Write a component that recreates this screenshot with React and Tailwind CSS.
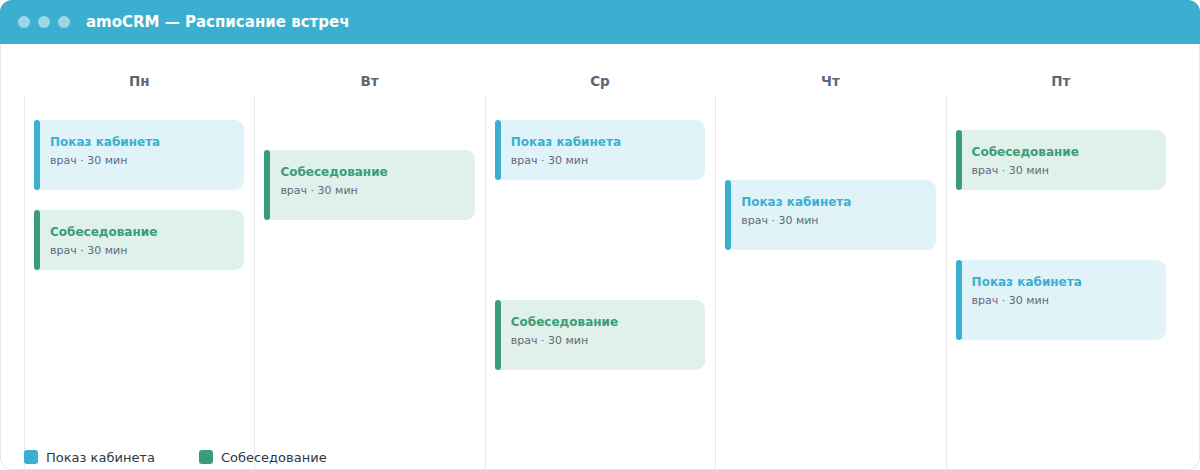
import React from "react";

const BLUE = { bar: "bg-[#3aafcf]", bg: "bg-[#e0f3f9]", text: "text-[#3aafcf]", title: "Показ кабинета" };
const GREEN = { bar: "bg-[#3a9c78]", bg: "bg-[#e0f0ea]", text: "text-[#3a9c78]", title: "Собеседование" };

function Card({ kind, h, mt }) {
  return (
    <div className={`flex ml-[9px] mr-[10px] ${mt} ${h}`}>
      <div className={`w-[6px] shrink-0 rounded-[3px] ${kind.bar}`} />
      <div className={`flex-1 rounded-r-[9px] ${kind.bg} pl-[10px] pt-[14px]`}>
        <div className={`text-[12px] font-bold leading-[16px] ${kind.text}`}>{kind.title}</div>
        <div className="text-[11px] leading-[14px] mt-[4px] text-[#5f6b76]">врач · 30 мин</div>
      </div>
    </div>
  );
}

const days = [
  { name: "Пн", cards: [{ k: BLUE, h: "h-[70px]", mt: "mt-[24px]" }, { k: GREEN, h: "h-[60px]", mt: "mt-[20px]" }] },
  { name: "Вт", cards: [{ k: GREEN, h: "h-[70px]", mt: "mt-[54px]" }] },
  { name: "Ср", cards: [{ k: BLUE, h: "h-[60px]", mt: "mt-[24px]" }, { k: GREEN, h: "h-[70px]", mt: "mt-[120px]" }] },
  { name: "Чт", cards: [{ k: BLUE, h: "h-[70px]", mt: "mt-[84px]" }] },
  { name: "Пт", cards: [{ k: GREEN, h: "h-[60px]", mt: "mt-[34px]" }, { k: BLUE, h: "h-[80px]", mt: "mt-[70px]" }] },
];

export default function App() {
  return (
    <div
      className="w-[1200px] h-[470px] bg-white overflow-hidden"
      style={{ fontFamily: '"DejaVu Sans", "Noto Sans", sans-serif' }}
    >
      <div className="relative w-full h-full rounded-[12px] overflow-hidden flex flex-col">
        <div className="h-[44px] shrink-0 bg-[#3aafcf] flex items-center pl-[18px]">
          <div className="flex gap-[8px]">
            <span className="w-[12px] h-[12px] rounded-full bg-white/50" />
            <span className="w-[12px] h-[12px] rounded-full bg-white/50" />
            <span className="w-[12px] h-[12px] rounded-full bg-white/50" />
          </div>
          <span className="ml-[16px] text-white font-bold text-[15px]">amoCRM — Расписание встреч</span>
        </div>
        <div className="flex-1 border-x border-b border-[#e3e6ea] rounded-b-[12px] grid grid-cols-5 px-[23px]">
          {days.map((d) => (
            <div key={d.name} className="flex flex-col">
              <div className="h-[52px] flex items-center justify-center pt-[22px] text-[13.5px] font-bold text-[#5a6878]">
                {d.name}
              </div>
              <div className="flex-1 border-l border-[#e6e8eb] flex flex-col">
                {d.cards.map((c, i) => (
                  <Card key={i} kind={c.k} h={c.h} mt={c.mt} />
                ))}
              </div>
            </div>
          ))}
        </div>
        <div className="absolute left-[24px] bottom-[3px] flex items-center text-[13px] text-[#2d3748]">
          <span className="w-[14px] h-[14px] rounded-[3px] bg-[#3aafcf]" />
          <span className="ml-[8px]">Показ кабинета</span>
          <span className="ml-[44px] w-[14px] h-[14px] rounded-[3px] bg-[#3a9c78]" />
          <span className="ml-[8px]">Собеседование</span>
        </div>
      </div>
    </div>
  );
}
